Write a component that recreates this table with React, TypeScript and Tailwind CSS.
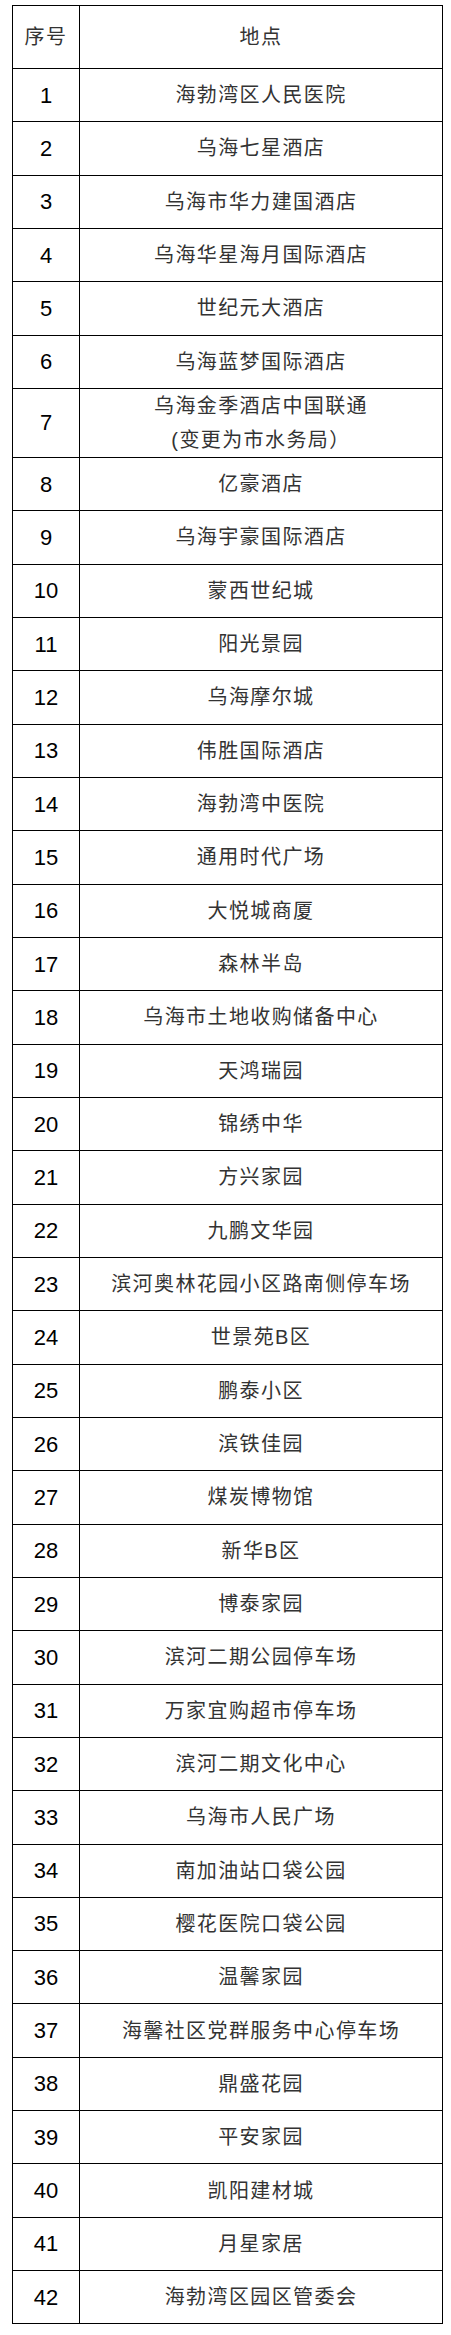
const places: string[][] = [
  ["海勃湾区人民医院"],
  ["乌海七星酒店"],
  ["乌海市华力建国酒店"],
  ["乌海华星海月国际酒店"],
  ["世纪元大酒店"],
  ["乌海蓝梦国际酒店"],
  ["乌海金季酒店中国联通", "(变更为市水务局）"],
  ["亿豪酒店"],
  ["乌海宇豪国际酒店"],
  ["蒙西世纪城"],
  ["阳光景园"],
  ["乌海摩尔城"],
  ["伟胜国际酒店"],
  ["海勃湾中医院"],
  ["通用时代广场"],
  ["大悦城商厦"],
  ["森林半岛"],
  ["乌海市土地收购储备中心"],
  ["天鸿瑞园"],
  ["锦绣中华"],
  ["方兴家园"],
  ["九鹏文华园"],
  ["滨河奥林花园小区路南侧停车场"],
  ["世景苑B区"],
  ["鹏泰小区"],
  ["滨铁佳园"],
  ["煤炭博物馆"],
  ["新华B区"],
  ["博泰家园"],
  ["滨河二期公园停车场"],
  ["万家宜购超市停车场"],
  ["滨河二期文化中心"],
  ["乌海市人民广场"],
  ["南加油站口袋公园"],
  ["樱花医院口袋公园"],
  ["温馨家园"],
  ["海馨社区党群服务中心停车场"],
  ["鼎盛花园"],
  ["平安家园"],
  ["凯阳建材城"],
  ["月星家居"],
  ["海勃湾区园区管委会"],
]

const font = { fontFamily: '"Liberation Sans", "Noto Sans CJK SC", sans-serif' }

export default function App() {
  return (
    <div className="bg-white min-h-[2335px] pt-[5px] pl-[12px]" style={font}>
      <div className="w-[431px] border-l border-t border-black grid grid-cols-[67px_363px]">
        {/* header */}
        <div className="h-[63px] border-r border-b border-black flex items-center justify-center text-[20px] tracking-[1.4px] text-[#333]">
          序号
        </div>
        <div className="h-[63px] border-r border-b border-black flex items-center justify-center text-[20px] tracking-[1.4px] text-[#333]">
          地点
        </div>

        {places.map((lines, i) => (
          <div key={i} className="contents">
            <div
              className={`${lines.length > 1 ? "h-[69px]" : "h-[53.33px]"} border-r border-b border-black flex items-center justify-center text-[22px] text-black`}
            >
              {i + 1}
            </div>
            <div
              className={`${lines.length > 1 ? "h-[69px]" : "h-[53.33px]"} border-r border-b border-black flex flex-col items-center justify-center text-[20px] leading-[34px] tracking-[1.4px] text-[#333]`}
            >
              {lines.map((l, j) => (
                <span key={j}>{l}</span>
              ))}
            </div>
          </div>
        ))}
      </div>
    </div>
  )
}
